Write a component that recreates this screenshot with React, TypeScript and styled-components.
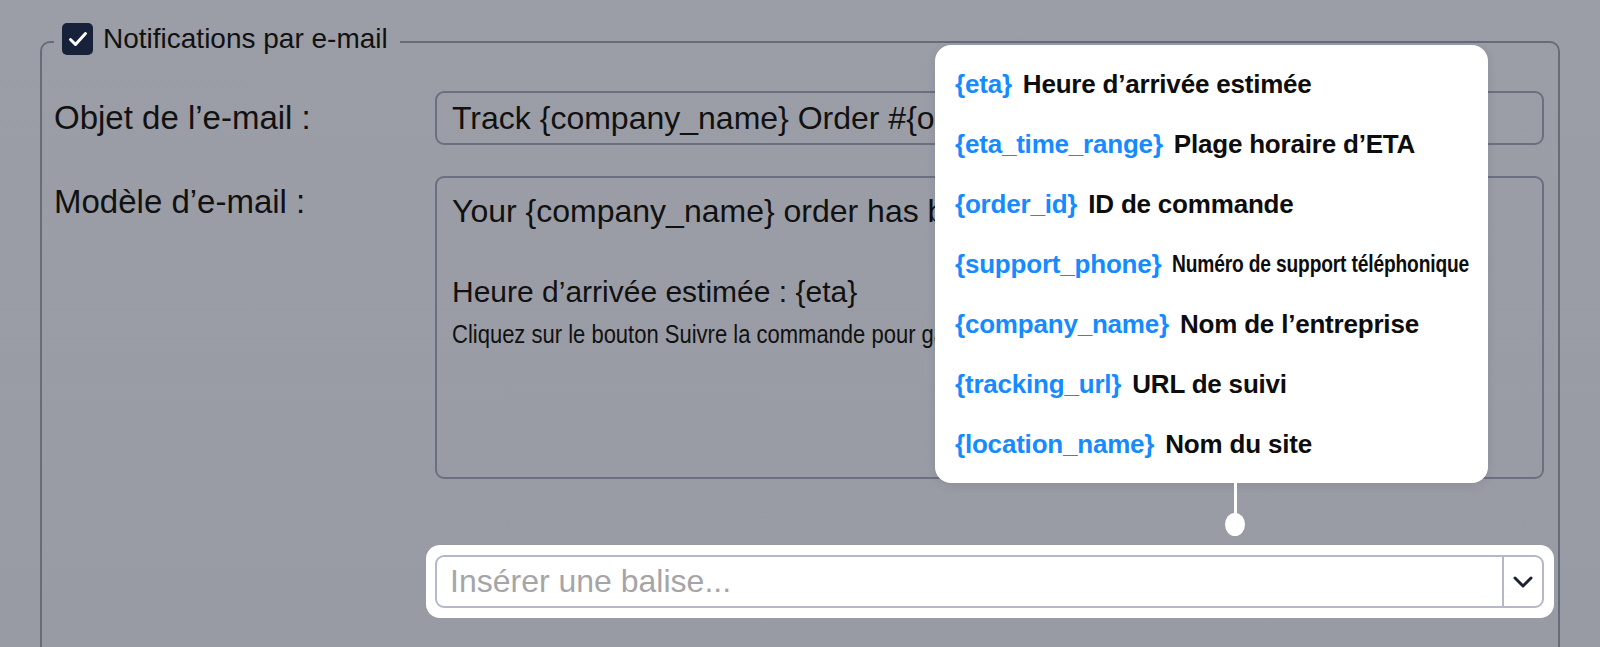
import React from "react";
import styled, { createGlobalStyle } from "styled-components";

const GlobalStyle = createGlobalStyle`
	html, body {
		margin: 0;
		padding: 0;
		background: #9a9da6;
		overflow: hidden;
	}
	body {
		font-family: "Liberation Sans", Arial, sans-serif;
		color: #111;
	}
`;

const Page = styled.div`
	width: 1600px;
	height: 647px;
	overflow: hidden;
	background: linear-gradient(180deg, #9b9ea7 0%, #989ba4 100%);
`;

const Fieldset = styled.fieldset`
	margin: 23px 40px 0 40px;
	padding: 0 14px 60px 12px;
	border: 2px solid #676c7b;
	border-radius: 10px;
	min-width: 0;
`;

const Legend = styled.legend`
	display: flex;
	align-items: center;
	gap: 10px;
	height: 32px;
	padding: 0 12px 6px 8px;
	font-size: 28px;
	line-height: 32px;
	color: #111;
`;

const CheckBox = styled.span`
	display: flex;
	align-items: center;
	justify-content: center;
	width: 31px;
	height: 32px;
	border-radius: 5px;
	background: #17213a;
`;

const Form = styled.div`
	display: flex;
	flex-direction: column;
	padding-top: 30px;
`;

const Row = styled.div<{ $top?: number; $align?: string }>`
	display: grid;
	grid-template-columns: 381px 1fr;
	align-items: ${(p) => p.$align || "center"};
	margin-top: ${(p) => p.$top || 0}px;
`;

const Label = styled.label<{ $offset?: number }>`
	font-size: 33px;
	line-height: 40px;
	margin-top: ${(p) => p.$offset || 0}px;
`;

const TextInput = styled.div`
	box-sizing: border-box;
	height: 54px;
	display: flex;
	align-items: center;
	padding: 0 15px;
	border: 2px solid #6b7081;
	border-radius: 9px;
	font-size: 32px;
	white-space: nowrap;
	overflow: hidden;
`;

const TextArea = styled.div`
	box-sizing: border-box;
	height: 303px;
	padding: 13px 15px;
	border: 2px solid #6b7081;
	border-radius: 9px;
	overflow: hidden;
`;

const Line = styled.div<{ $size: number; $lh: number }>`
	font-size: ${(p) => p.$size}px;
	line-height: ${(p) => p.$lh}px;
	height: ${(p) => p.$lh}px;
	white-space: nowrap;
`;

const Narrow = styled.span<{ $scale: number }>`
	display: inline-block;
	transform: scaleX(${(p) => p.$scale});
	transform-origin: left center;
`;

const Highlight = styled.div`
	position: relative;
	margin: 0 -10px 0 -9px;
	padding: 10px 10px 10px 9px;
	background: #fff;
	border-radius: 14px;
`;

const Select = styled.div`
	box-sizing: border-box;
	height: 53px;
	display: flex;
	border: 2px solid #b6b8ca;
	border-radius: 9px;
	background: #fff;
`;

const Placeholder = styled.div`
	flex: 1;
	display: flex;
	align-items: center;
	padding-left: 13px;
	font-size: 32px;
	color: #a5a5a8;
`;

const Toggle = styled.div`
	width: 38px;
	display: flex;
	align-items: center;
	justify-content: center;
	border-left: 2px solid #b6b8ca;
`;

const Popover = styled.div`
	position: absolute;
	left: 509px;
	bottom: calc(100% + 62px);
	width: 553px;
	box-sizing: border-box;
	padding: 9px 20px 9px 20px;
	background: #fff;
	border-radius: 16px;
	box-shadow: 0 2px 10px rgba(40, 45, 60, 0.12);
`;

const TagRow = styled.div`
	display: flex;
	align-items: center;
	gap: 11px;
	height: 60px;
	white-space: nowrap;
	font-size: 26px;
	font-weight: 700;
	letter-spacing: -0.2px;
`;

const Tag = styled.span`
	color: #168bff;
`;

const TagLabel = styled.span<{ $small?: boolean }>`
	color: #0d0d0d;
	font-size: ${(p) => (p.$small ? "24px" : "26px")};
	${(p) => (p.$small ? "display: inline-block; transform: scaleX(0.8); transform-origin: left center;" : "")}
`;

const Stem = styled.div`
	position: absolute;
	left: 808px;
	top: -62px;
	width: 3px;
	height: 40px;
	background: #fff;
`;

const Knob = styled.div`
	position: absolute;
	left: 799px;
	top: -32px;
	width: 20px;
	height: 23px;
	border-radius: 50%;
	background: #fff;
`;

const tags = [
	{ tag: "{eta}", label: "Heure d’arrivée estimée" },
	{ tag: "{eta_time_range}", label: "Plage horaire d’ETA" },
	{ tag: "{order_id}", label: "ID de commande" },
	{ tag: "{support_phone}", label: "Numéro de support téléphonique", small: true },
	{ tag: "{company_name}", label: "Nom de l’entreprise" },
	{ tag: "{tracking_url}", label: "URL de suivi" },
	{ tag: "{location_name}", label: "Nom du site" },
];

const App = () => (
	<Page>
		<GlobalStyle />
		<Fieldset>
			<Legend>
				<CheckBox>
					<svg width="24" height="24" viewBox="0 0 24 24" fill="none">
						<polyline
							points="4.5,12.5 9.5,17.5 19.5,6.5"
							stroke="#fff"
							strokeWidth="3"
							strokeLinecap="round"
							strokeLinejoin="round"
						/>
					</svg>
				</CheckBox>
				Notifications par e-mail
			</Legend>
			<Form>
				<Row>
					<Label>Objet de l’e-mail :</Label>
					<TextInput>Track {"{company_name}"} Order #{"{order_id}"}</TextInput>
				</Row>
				<Row $top={31} $align="start">
					<Label $offset={6}>Modèle d’e-mail :</Label>
					<TextArea>
						<Line $size={32} $lh={40}>
							Your {"{company_name}"} order has been shipped!
						</Line>
						<Line $size={32} $lh={41} />
						<Line $size={30} $lh={40}>
							Heure d’arrivée estimée : {"{eta}"}
						</Line>
						<Line $size={25} $lh={44}>
							<Narrow $scale={0.88}>
								Cliquez sur le bouton Suivre la commande pour garder un œil sur votre livraison.
							</Narrow>
						</Line>
					</TextArea>
				</Row>
				<Row $top={66}>
					<span />
					<Highlight>
						<Popover>
							{tags.map((t) => (
								<TagRow key={t.tag}>
									<Tag>{t.tag}</Tag>
									<TagLabel $small={t.small}>{t.label}</TagLabel>
								</TagRow>
							))}
						</Popover>
						<Stem />
						<Knob />
						<Select>
							<Placeholder>Insérer une balise...</Placeholder>
							<Toggle>
								<svg width="20" height="12" viewBox="0 0 20 12" fill="none">
									<polyline
										points="2,2 10,10 18,2"
										stroke="#1c2233"
										strokeWidth="3"
										strokeLinecap="round"
										strokeLinejoin="round"
									/>
								</svg>
							</Toggle>
						</Select>
					</Highlight>
				</Row>
			</Form>
		</Fieldset>
	</Page>
);

export default App;
